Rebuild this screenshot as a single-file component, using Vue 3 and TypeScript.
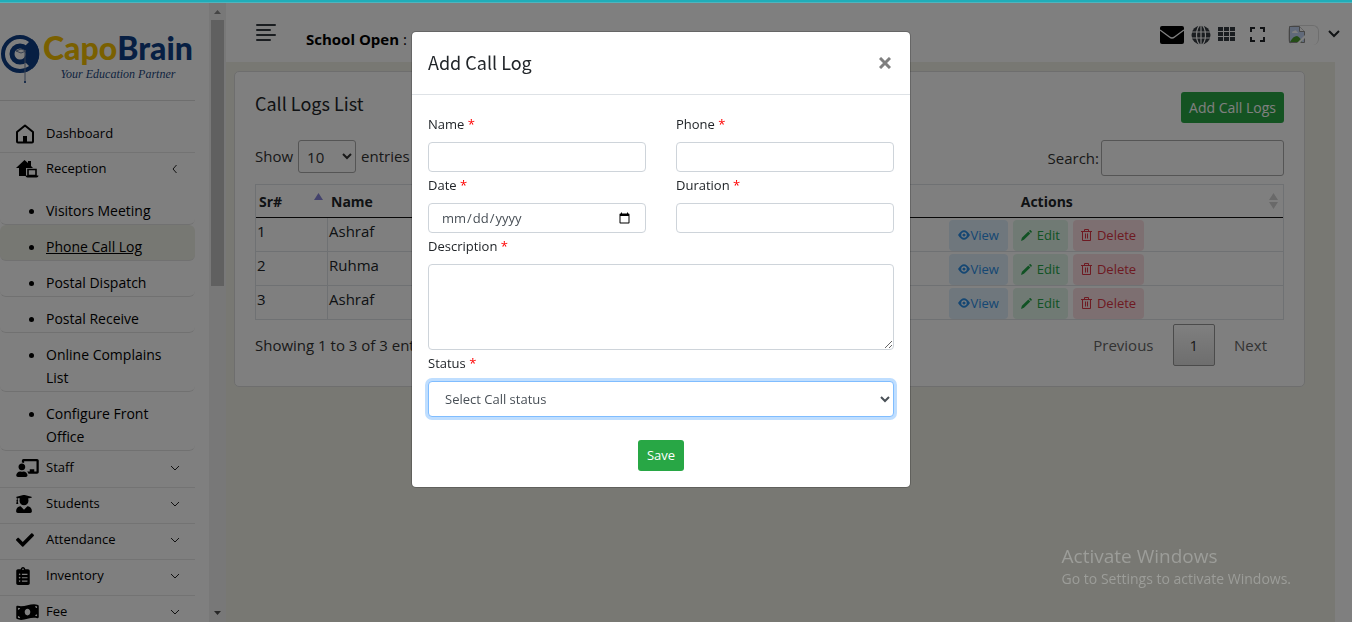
<script setup lang="ts">
import { ref } from 'vue'

interface MenuItem {
  label: string
  viewBox: string
  width: number
  path: string
}

const receptionLinks = [
  'Visitors Meeting',
  'Phone Call Log',
  'Postal Dispatch',
  'Postal Receive',
  'Online Complains List',
  'Configure Front Office',
]
const activeLink = ref('Phone Call Log')

const menu: MenuItem[] = [
  {
    label: 'Staff',
    viewBox: '0 0 640 512',
    width: 23,
    path: 'M208 352c-2.39 0-4.78.35-7.06 1.09C187.98 357.3 174.35 360 160 360c-14.35 0-27.98-2.7-40.95-6.91-2.28-.74-4.66-1.09-7.05-1.09C49.94 352-.33 402.48 0 464.62.14 490.88 21.73 512 48 512h224c26.27 0 47.86-21.12 48-47.38.33-62.14-49.94-112.62-112-112.62zm-48-32c53.02 0 96-42.98 96-96s-42.98-96-96-96-96 42.98-96 96 42.98 96 96 96zM592 0H208c-26.47 0-48 22.25-48 49.59V96c23.42 0 45.1 6.78 64 17.8V64h352v288h-64v-64H384v64h-76.24c19.1 16.69 33.12 38.73 39.69 64H592c26.47 0 48-22.25 48-49.59V49.59C640 22.25 618.47 0 592 0z',
  },
  {
    label: 'Students',
    viewBox: '0 0 448 512',
    width: 16,
    path: 'M319.4 320.6L224 416l-95.4-95.4C57.1 323.7 0 382.2 0 454.4v9.6c0 26.5 21.5 48 48 48h352c26.5 0 48-21.5 48-48v-9.6c0-72.2-57.1-130.7-128.6-133.8zM13.6 79.8l6.4 1.5v58.4c-7 4.2-12 11.5-12 20.3 0 8.4 4.6 15.4 11.1 19.7L3.5 242c-1.7 6.9 2.1 14 7.6 14h41.8c5.5 0 9.3-7.1 7.6-14l-15.6-62.3C51.4 175.4 56 168.4 56 160c0-8.8-5-16.1-12-20.3V87.1l66 15.9c-8.6 17.2-14 36.4-14 57 0 70.7 57.3 128 128 128s128-57.3 128-128c0-20.6-5.3-39.8-14-57l96.3-23.2c18.2-4.4 18.2-27.1 0-31.5l-190.4-46c-13-3.1-26.7-3.1-39.7 0L13.6 48.2c-18.1 4.4-18.1 27.2 0 31.6z',
  },
  {
    label: 'Attendance',
    viewBox: '0 0 512 512',
    width: 18,
    path: 'M173.898 439.404l-166.4-166.4c-9.997-9.997-9.997-26.206 0-36.204l36.203-36.204c9.997-9.998 26.207-9.998 36.204 0L192 312.69 432.095 72.596c9.997-9.997 26.207-9.997 36.204 0l36.203 36.204c9.997 9.997 9.997 26.206 0 36.204l-294.4 294.401c-9.998 9.997-26.207 9.997-36.204-.001z',
  },
  {
    label: 'Inventory',
    viewBox: '0 0 384 512',
    width: 14,
    path: 'M336 64h-80c0-35.3-28.7-64-64-64s-64 28.7-64 64H48C21.5 64 0 85.5 0 112v352c0 26.5 21.5 48 48 48h288c26.5 0 48-21.5 48-48V112c0-26.5-21.5-48-48-48zM96 424c-13.3 0-24-10.7-24-24s10.7-24 24-24 24 10.7 24 24-10.7 24-24 24zm0-96c-13.3 0-24-10.7-24-24s10.7-24 24-24 24 10.7 24 24-10.7 24-24 24zm0-96c-13.3 0-24-10.7-24-24s10.7-24 24-24 24 10.7 24 24-10.7 24-24 24zm96-192c13.3 0 24 10.7 24 24s-10.7 24-24 24-24-10.7-24-24 10.7-24 24-24zm128 368c0 4.4-3.6 8-8 8H168c-4.4 0-8-3.6-8-8v-16c0-4.4 3.6-8 8-8h144c4.4 0 8 3.6 8 8v16zm0-96c0 4.4-3.6 8-8 8H168c-4.4 0-8-3.6-8-8v-16c0-4.4 3.6-8 8-8h144c4.4 0 8 3.6 8 8v16zm0-96c0 4.4-3.6 8-8 8H168c-4.4 0-8-3.6-8-8v-16c0-4.4 3.6-8 8-8h144c4.4 0 8 3.6 8 8v16z',
  },
  {
    label: 'Fee',
    viewBox: '0 0 640 512',
    width: 23,
    path: 'M621.16 54.46C582.37 38.19 543.55 32 504.75 32c-123.17-.01-246.33 62.34-369.5 62.34-30.89 0-61.76-3.92-92.65-13.72-3.47-1.1-6.95-1.62-10.35-1.62C15.04 79 0 92.32 0 110.81v317.26c0 12.63 7.23 24.6 18.84 29.46C57.63 473.81 96.45 480 135.25 480c123.17 0 246.34-62.35 369.51-62.35 30.89 0 61.76 3.92 92.65 13.72 3.47 1.1 6.95 1.62 10.35 1.62 17.21 0 32.25-13.32 32.25-31.81V83.93c-.01-12.64-7.24-24.6-18.85-29.47zM48 132.22c20.12 5.04 41.12 7.57 62.72 8.93C104.84 170.54 79 192.69 48 192.69v-60.47zm0 285v-47.78c34.37 0 62.18 27.27 63.71 61.4-22.53-1.81-43.59-6.31-63.71-13.62zM320 352c-44.19 0-80-42.99-80-96 0-53.02 35.82-96 80-96s80 42.98 80 96c0 53.03-35.83 96-80 96zm272 27.78c-17.52-4.39-35.71-6.85-54.32-8.44 5.87-26.08 27.5-45.88 54.32-49.28v57.72zm0-236.11c-30.89-3.91-54.86-29.7-55.81-61.55 19.54 2.17 38.09 6.23 55.81 12.66v48.89z',
  },
]

const rows = [
  { id: 1, name: 'Ashraf' },
  { id: 2, name: 'Ruhma' },
  { id: 3, name: 'Ashraf' },
]

const modalOpen = ref(true)
</script>

<template>
  <div class="page">
    <div class="progress"></div>
    <div class="shell">
      <aside class="sidebar">
        <div class="side-content">
          <div class="brand">
            <svg class="brand-mark" width="40" height="52" viewBox="0 0 40 52">
              <circle cx="20" cy="21" r="17" fill="none" stroke="#0f3e86" stroke-width="4" />
              <path d="M32 6A19 19 0 0 1 32 36L24 28V14z" fill="#0f3e86" />
              <circle cx="20" cy="21" r="8" fill="#fff" stroke="#0f3e86" stroke-width="5" />
              <path d="M16 18l5-2 5 2-5 2zM25 19v31" fill="#fff" stroke="#6c7f9f" stroke-width="1" />
              <circle cx="25" cy="49" r="1" fill="#0f3e86" />
            </svg>
            <div class="brand-text">
              <div class="brand-name"><span class="gold">Capo</span><span class="navy">Brain</span></div>
              <div class="brand-tag">Your Education Partner</div>
            </div>
          </div>
          <nav class="menu">
            <a href="#" class="menu-item first">
              <span class="icon">
                <svg width="20" height="20" viewBox="0 0 20 20" fill="none" stroke="#000" stroke-width="2" stroke-linejoin="round">
                  <path d="M1 8l8-6.500 8 6.500v9.500q0 1-1 1H2q-1 0-1-1z" />
                  <path d="M7 12h4v6H7z" fill="#000" stroke="none" />
                </svg>
              </span>
              <span>Dashboard</span>
            </a>
            <a href="#" class="menu-item parent">
              <span class="icon">
                <svg width="23" height="18" viewBox="0 0 23 18">
                  <path d="M0 8L8.500 0 12 3V1h3v5l2 2H10v8H3V8z" />
                  <path d="M12 9.500h8v6h-8z" fill="#fff" stroke="#000" stroke-width="1.600" />
                  <path d="M9.500 15.500h13q0 2-2 2h-9q-2 0-2-2z" />
                </svg>
              </span>
              <span class="grow">Reception</span>
              <svg class="chev" width="10" height="10" viewBox="0 0 10 10"><path d="M6.500 1L3 5l3.500 4" /></svg>
            </a>
            <ul class="submenu">
              <li v-for="link in receptionLinks" :key="link" :class="{ active: link === activeLink }">
                <a href="#" @click.prevent="activeLink = link">{{ link }}</a>
              </li>
            </ul>
            <a v-for="item in menu" :key="item.label" href="#" class="menu-item">
              <span class="icon">
                <svg :width="item.width" height="18" :viewBox="item.viewBox"><path :d="item.path" /></svg>
              </span>
              <span class="grow">{{ item.label }}</span>
              <svg class="chev" width="10" height="10" viewBox="0 0 10 10"><path d="M1 3l4 4 4-4" /></svg>
            </a>
          </nav>
        </div>
        <div class="scrollbar">
          <svg width="17" height="17" viewBox="0 0 17 17"><path d="M5 11h7L8.500 7z" fill="#8a8a8a" /></svg>
          <div class="thumb"></div>
          <svg width="17" height="17" viewBox="0 0 17 17"><path d="M5 6h7L8.500 10z" fill="#505050" /></svg>
        </div>
      </aside>

      <div class="content">
        <header class="topbar">
          <button class="plain burger" aria-label="Toggle menu">
            <svg width="21" height="20" viewBox="0 0 21 20" stroke="#343a40" stroke-width="2" stroke-linecap="round">
              <path d="M1 3h18M1 8h13M1 13h18M1 18h13" />
            </svg>
          </button>
          <div class="school"><b>School Open</b> :</div>
          <div class="tools">
            <button class="plain" aria-label="Messages">
              <svg width="24" height="18" viewBox="0 0 24 18">
                <rect width="24" height="18" rx="2" />
                <path d="M0 4l9.500 7q2.500 2 5 0L24 4" fill="none" stroke="#fff" stroke-width="1.400" />
              </svg>
            </button>
            <button class="plain" aria-label="Language">
              <svg width="20" height="20" viewBox="0 0 20 20">
                <circle cx="10" cy="10" r="9.500" fill="#343a40" />
                <path d="M0 7h20M0 13h20M10 0v20" fill="none" stroke="#fff" stroke-width="1.200" />
                <ellipse cx="10" cy="10" rx="4.500" ry="10" fill="none" stroke="#fff" stroke-width="1.200" />
              </svg>
            </button>
            <button class="plain" aria-label="Apps">
              <svg width="17" height="15" viewBox="0 0 17 15" fill="#343a40">
                <path d="M0 0h5v4H0zM6 0h5v4H6zM12 0h5v4h-5zM0 5h5v4H0zM6 5h5v4H6zM12 5h5v4h-5zM0 10h5v4H0zM6 10h5v4H6zM12 10h5v4h-5z" />
              </svg>
            </button>
            <button class="plain full" aria-label="Full screen">
              <svg width="15" height="15" viewBox="0 0 15 15" fill="none" stroke="#212529" stroke-width="2">
                <path d="M1 5V1h4M10 1h4v4M14 10v4h-4M5 14H1v-4" />
              </svg>
            </button>
            <button class="plain profile" aria-label="Profile">
              <span class="avatar">
                <svg width="16" height="17" viewBox="0 0 16 17">
                  <path d="M.5.500h10l5 5v11H.5z" fill="#c3d4f5" stroke="#8c8c8c" />
                  <path d="M10.500.500v5h5" fill="#fff" stroke="#8c8c8c" />
                  <path d="M3 7q0-2 2-2 2-2 3 1 1 0 1 1z" fill="#fff" />
                  <path d="M1 16q3-6 7-6 3 1 5 6z" fill="#4a9b2f" />
                  <path d="M8 17l8-8v3l-5 5z" fill="#fff" />
                </svg>
              </span>
              <svg width="12" height="9" viewBox="0 0 12 9" fill="none" stroke="#212529" stroke-width="2"><path d="M1 1l5 5 5-5" /></svg>
            </button>
          </div>
        </header>

        <div class="body-row">
          <main class="main">
            <section class="card">
              <div class="card-head">
                <h1>Call Logs List</h1>
                <button class="btn" @click="modalOpen = true">Add Call Logs</button>
              </div>
              <div class="controls">
                <label class="length">Show
                  <select><option>10</option><option>25</option></select>
                  entries</label>
                <label class="search">Search:<input type="search" /></label>
              </div>
              <table>
                <colgroup><col class="c-sr" /><col /><col class="c-act" /></colgroup>
                <thead>
                  <tr>
                    <th><div class="th">Sr#
                      <svg width="9" height="16" viewBox="0 0 9 16"><path d="M0 7h9L4.500 0z" fill="#8684d9" /></svg></div></th>
                    <th><div class="th">Name</div></th>
                    <th><div class="th"><span class="mid">Actions</span>
                      <svg width="9" height="16" viewBox="0 0 9 16" fill="#d3d3d3"><path d="M0 7h9L4.500 0zM0 9h9l-4.500 7z" /></svg></div></th>
                  </tr>
                </thead>
                <tbody>
                  <tr v-for="row in rows" :key="row.id">
                    <td>{{ row.id }}</td>
                    <td>{{ row.name }}</td>
                    <td>
                      <div class="actions">
                        <button class="act view">
                          <svg width="12" height="10" viewBox="0 0 12 10">
                            <path d="M0 5q6-9.500 12 0-6 9.500-12 0z" fill="currentColor" />
                            <circle cx="6" cy="5" r="2.700" fill="#fff" /><circle cx="6" cy="5" r="1.600" fill="currentColor" />
                          </svg>View
                        </button>
                        <button class="act edit">
                          <svg width="11" height="11" viewBox="0 0 12 12" fill="currentColor"><path d="M0 12l1-3.500 7-7 2.200 2.200-7 7zM8.700 1l.7-.700q.600-.500 1.200 0l1 1q.500.600 0 1.200l-.700.700z" /></svg>Edit
                        </button>
                        <button class="act delete">
                          <svg width="11" height="12" viewBox="0 0 11 12" fill="none" stroke="currentColor"><path d="M0 2.500h11M3.500 2V.500h4V2M1.500 3v8.500h8V3M4.500 4.500v5M6.500 4.500v5" /></svg>Delete
                        </button>
                      </div>
                    </td>
                  </tr>
                </tbody>
              </table>
              <div class="card-foot">
                <span>Showing 1 to 3 of 3 entries</span>
                <div class="pager">
                  <button class="page-link">Previous</button>
                  <button class="page-link current">1</button>
                  <button class="page-link">Next</button>
                </div>
              </div>
            </section>
          </main>
          <div class="gutter"></div>
        </div>
      </div>
    </div>

    <div v-if="modalOpen" class="overlay">
      <form class="modal" role="dialog" aria-labelledby="modal-title" @submit.prevent>
        <div class="modal-head">
          <h2 id="modal-title">Add Call Log</h2>
          <button type="button" class="plain close" aria-label="Close" @click="modalOpen = false">
            <svg width="12" height="12" viewBox="0 0 12 12" stroke="#7f7f7f" stroke-width="3"><path d="M1 1l10 10M11 1L1 11" /></svg>
          </button>
        </div>
        <div class="modal-body">
          <div class="field"><label for="name">Name <i>*</i></label><input id="name" type="text" /></div>
          <div class="field"><label for="phone">Phone <i>*</i></label><input id="phone" type="text" /></div>
          <div class="field"><label for="date">Date <i>*</i></label><input id="date" type="date" /></div>
          <div class="field"><label for="duration">Duration <i>*</i></label><input id="duration" type="text" /></div>
          <div class="field wide"><label for="desc">Description <i>*</i></label><textarea id="desc"></textarea></div>
          <div class="field wide">
            <label for="status">Status <i>*</i></label>
            <select id="status" class="focused"><option>Select Call status</option></select>
          </div>
        </div>
        <div class="modal-foot"><button class="btn save" type="submit">Save</button></div>
      </form>
    </div>

    <div class="watermark">
      <div class="wm-title">Activate Windows</div>
      <div>Go to Settings to activate Windows.</div>
    </div>
  </div>
</template>

<style>
body {
  margin: 0;
  overflow: hidden;
}
</style>

<style scoped>
.page,
.page * {
  box-sizing: border-box;
}
.page {
  height: 100vh;
  display: flex;
  flex-direction: column;
  background: #fff;
  color: #212529;
  font: 15px/23px "Segoe UI", "Open Sans", sans-serif;
  overflow: hidden;
}
button,
input,
select,
textarea {
  font: inherit;
  color: inherit;
  margin: 0;
}
button {
  cursor: pointer;
}
.plain {
  background: none;
  border: 0;
  padding: 0;
  display: flex;
  align-items: center;
}
.progress {
  flex: none;
  height: 3px;
  background: #20adb9;
  border-bottom: 1px solid #4fb4bd;
  position: relative;
  z-index: 20;
}
.shell {
  flex: 1;
  min-height: 0;
  display: flex;
}

.sidebar {
  flex: none;
  width: 226px;
  display: flex;
}
.side-content {
  flex: 1;
  min-width: 0;
  padding-right: 14px;
  overflow: hidden;
  color: #000;
}
.brand {
  height: 98px;
  padding-top: 30px;
  display: flex;
  gap: 3px;
  border-bottom: 1px solid #ddd;
}
.brand-mark {
  flex: none;
}
.brand-name {
  font: 900 32px/30px Lato, sans-serif;
  display: flex;
}
.gold {
  color: #f5c000;
}
.navy {
  color: #0f3e86;
}
.brand-tag {
  margin-top: 3px;
  font: italic 12px/16px "Liberation Serif", serif;
  text-align: center;
  color: #23487f;
}
.menu {
  padding-top: 11px;
}
.menu-item {
  display: flex;
  height: 36px;
  padding: 4px 15px 8px 16px;
  align-items: center;
  color: #000;
  font-size: 13px;
  text-decoration: none;
  border-bottom: 1px solid #e6e6e6;
}
.first {
  height: 41px;
  padding: 10px 15px 7px 16px;
}
.parent {
  height: 35px;
  border: 0;
}
.icon {
  width: 30px;
  display: flex;
  flex: none;
}
.grow {
  flex: 1;
}
.chev {
  fill: none;
  stroke: #222;
  stroke-width: 1px;
}
.submenu {
  margin: 0;
  padding: 1px 0;
  list-style: none;
  font-size: 14px;
}
.submenu li {
  padding: 10px 24px 2px 46px;
  border-bottom: 1px solid #e3e3e3;
  border-radius: 6px;
  position: relative;
}
.submenu li::before {
  content: "";
  position: absolute;
  left: 29px;
  top: 20px;
  width: 5px;
  height: 5px;
  border-radius: 50%;
  background: #000;
}
.submenu li.active {
  background: #eff0e6;
}
.submenu a {
  color: #000;
  text-decoration: none;
}
.submenu .active a {
  text-decoration: underline;
}
.scrollbar {
  width: 17px;
  background: #f1f1f1;
  display: flex;
  flex-direction: column;
}
.scrollbar svg {
  flex: none;
}
.thumb {
  height: 43%;
  margin: 0 2px auto;
  background: #c1c1c1;
}

.content {
  flex: 1;
  min-width: 0;
  display: flex;
  flex-direction: column;
}
.topbar {
  height: 59px;
  flex: none;
  display: flex;
  align-items: center;
  padding: 4px 12px 0 30px;
}
.burger {
  margin: -6px 29px 0 0;
}
.school {
  flex: 1;
  color: #000;
  padding-top: 9px;
}
.tools {
  display: flex;
  align-items: center;
  gap: 7px;
}
.full {
  margin: 0 16px 0 8px;
}
.profile {
  gap: 9px;
}
.avatar {
  width: 31px;
  height: 20px;
  border: 1px solid #ddd;
  border-bottom: 0;
  border-radius: 6px;
  display: flex;
}
.body-row {
  flex: 1;
  display: flex;
}
.main {
  flex: 1;
  min-width: 0;
  background: #f0f1e7;
  padding: 9px 30px 0 8px;
}
.gutter {
  width: 17px;
  background: #fff;
}
.card {
  background: #fff;
  border: 1px solid #dcdcdc;
  border-radius: 5px;
  padding: 20px;
}
.card-head {
  display: flex;
  justify-content: space-between;
  align-items: center;
  margin-bottom: 17px;
}
h1,
h2 {
  margin: 0;
  font: 400 18px/25px "Noto Sans CJK SC", sans-serif;
}
h1 {
  margin-top: -8px;
}
h2 {
  margin-top: -2px;
}
.btn {
  height: 31px;
  padding: 0 8px;
  border: 0;
  border-radius: 3px;
  background: #28a745;
  color: #fff;
  font-size: 14px;
}
.controls {
  display: flex;
  justify-content: space-between;
  align-items: flex-start;
  height: 44px;
  color: #333;
}
.length {
  display: flex;
  align-items: center;
  gap: 5px;
}
.length select {
  width: 58px;
  height: 33px;
  padding: 0 4px;
  background: #fff;
  border: 1px solid #aaa;
  border-radius: 3px;
}
.search {
  display: flex;
  align-items: center;
  gap: 2px;
}
.search input {
  width: 183px;
  height: 36px;
  background: #fff;
  border: 1px solid #aaa;
  border-radius: 3px;
}
table {
  width: 100%;
  table-layout: fixed;
  border-collapse: separate;
  border-spacing: 0;
  border: 1px solid #dee2e6;
  border-bottom: 0;
}
.c-sr {
  width: 72px;
}
.c-act {
  width: 46%;
}
th {
  height: 33px;
  padding: 0 5px 0 3px;
  border-bottom: 1px solid #111;
  font-size: 14px;
  text-align: left;
}
.th {
  display: flex;
  align-items: center;
  justify-content: space-between;
}
.mid {
  flex: 1;
  padding-left: 11px;
  text-align: center;
}
td {
  height: 34px;
  padding: 0 1px 6px;
  border-bottom: 1px solid #dee2e6;
}
td:first-child {
  border-right: 1px solid #dee2e6;
}
td:last-child {
  padding: 1px 0 0;
}
.actions {
  display: flex;
  justify-content: center;
  gap: 5px;
}
.act {
  height: 31px;
  padding: 0 8px;
  border: 0;
  border-radius: 4px;
  display: flex;
  align-items: center;
  gap: 5px;
  font-size: 13px;
}
.view {
  padding: 0 9px;
  background: #deeefb;
  color: #2b8fe6;
  gap: 0;
}
.edit {
  background: #e0f5e8;
  color: #22a548;
}
.delete {
  background: #fbdfe3;
  color: #dc3545;
}
.card-foot {
  display: flex;
  justify-content: space-between;
  align-items: center;
  margin-top: 4px;
  color: #333;
}
.pager {
  display: flex;
  gap: 2px;
}
.page-link {
  height: 42px;
  padding: 0 16px;
  background: none;
  border: 1px solid transparent;
  border-radius: 2px;
  color: #666;
}
.current {
  color: #333;
  border-color: #979797;
  background: linear-gradient(#fff, #dcdcdc);
}

.overlay {
  position: fixed;
  inset: 0;
  z-index: 10;
  display: flex;
  justify-content: center;
  align-items: flex-start;
  padding: 31px 30px 0 0;
  background: rgba(0, 0, 0, 0.5);
}
.modal {
  width: 500px;
  background: #fff;
  background-clip: padding-box;
  border: 1px solid rgba(0, 0, 0, 0.2);
  border-radius: 5px;
  font-size: 13px;
}
.modal-head {
  display: flex;
  justify-content: space-between;
  align-items: center;
  height: 63px;
  padding: 0 19px 0 16px;
  border-bottom: 1px solid #dee2e6;
}
.modal-body {
  display: grid;
  grid-template-columns: 1fr 1fr;
  column-gap: 30px;
  padding: 16px 16px 23px;
}
.wide {
  grid-column: 1 / -1;
}
.field label {
  display: block;
  height: 31px;
  line-height: 26px;
}
.field i {
  color: red;
  font-style: normal;
}
.field input,
.field textarea,
.field select {
  display: block;
  width: 100%;
  height: 30px;
  padding: 0 12px;
  background: #fff;
  border: 1px solid #ced4da;
  border-radius: 4px;
  color: #495057;
}
.field textarea {
  height: 86px;
  resize: vertical;
}
.field select {
  height: 36px;
}
.field select.focused {
  border-color: #80bdff;
  box-shadow: 0 0 0 3px #bfdeff;
  outline: 0;
}
.modal-foot {
  display: flex;
  justify-content: center;
  padding-bottom: 16px;
}
.save {
  padding: 0 9px;
  font-size: 13px;
}
.watermark {
  position: fixed;
  right: 61px;
  bottom: 33px;
  z-index: 30;
  color: #9c9d99;
  font-size: 14px;
  line-height: 20px;
}
.wm-title {
  font-size: 19px;
  line-height: 25px;
}
</style>
